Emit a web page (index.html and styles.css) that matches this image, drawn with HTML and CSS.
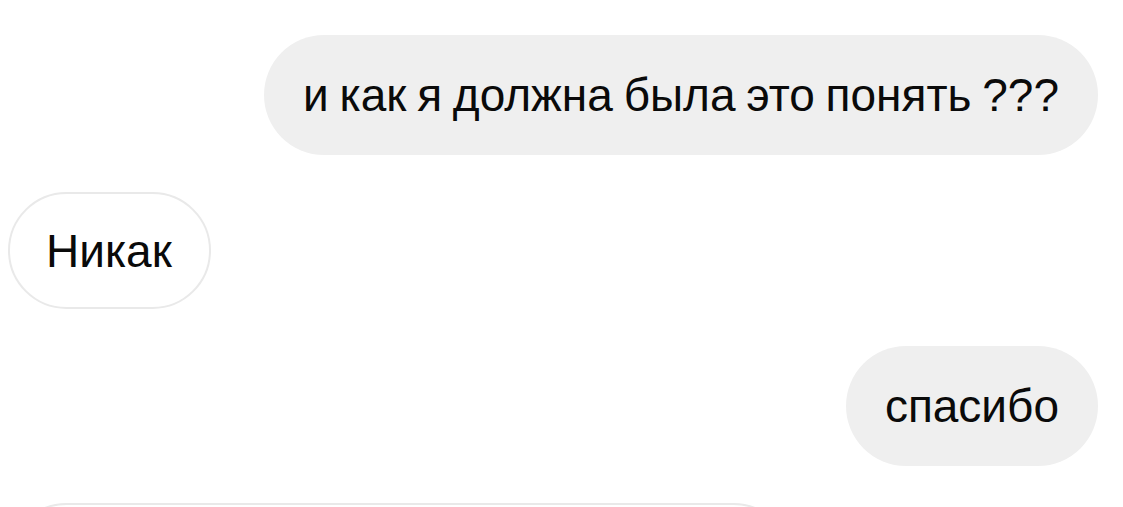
FILE: index.html
```html
<!DOCTYPE html>
<html lang="ru">
<head>
<meta charset="utf-8">
<link rel="stylesheet" href="styles.css">
</head>
<body>
<div class="chat">
  <div class="row row-out"><div class="bubble bubble-out">и как я должна была это понять ???</div></div>
  <div class="row row-in"><div class="bubble bubble-in">Никак</div></div>
  <div class="row row-out"><div class="bubble bubble-out">спасибо</div></div>
  <div class="row row-in"><div class="bubble bubble-in bubble-wide">&nbsp;</div></div>
</div>
</body>
</html>
```
FILE: styles.css
```css
html, body {
  margin: 0;
  padding: 0;
  background: #ffffff;
  height: 507px;
  overflow: hidden;
}
.chat {
  display: flex;
  flex-direction: column;
  gap: 37px;
  padding: 35px 25px 0 8px;
  font-family: "Liberation Sans", Arial, sans-serif;
  font-size: 46px;
  color: #0a0a0a;
}
.row {
  display: flex;
}
.row-out {
  justify-content: flex-end;
}
.row-in {
  justify-content: flex-start;
}
.bubble {
  line-height: 56px;
  border-radius: 60px;
  white-space: nowrap;
  word-spacing: -2px;
}
.bubble-out {
  background: #efefef;
  padding: 32px 39px 32px 39px;
}
.bubble-in {
  background: #ffffff;
  border: 2px solid #e9e9e9;
  padding: 29px 37px 28px 36px;
}
.bubble-wide {
  width: 707px;
}
```
